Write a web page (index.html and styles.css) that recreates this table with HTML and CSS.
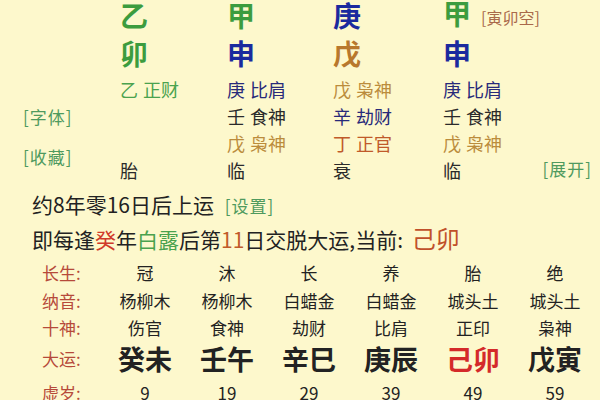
FILE: index.html
```html
<!DOCTYPE html>
<html lang="zh">
<head>
<meta charset="utf-8">
<link rel="stylesheet" href="styles.css">
</head>
<body>
<div class="page">
  <section class="top">
    <div class="side">
      <span class="link">[字体]</span>
      <span class="link">[收藏]</span>
    </div>
    <div class="pillars">
      <div class="big green">乙</div>
      <div class="big green">甲</div>
      <div class="big blue">庚</div>
      <div class="big green">甲<span class="kong">[寅卯空]</span></div>

      <div class="big green">卯</div>
      <div class="big blue">申</div>
      <div class="big brown">戊</div>
      <div class="big blue">申</div>

      <div class="sm lgreen">乙 正财</div>
      <div class="sm navy">庚 比肩</div>
      <div class="sm tan">戊 枭神</div>
      <div class="sm navy">庚 比肩</div>

      <div class="sm"></div>
      <div class="sm dark">壬 食神</div>
      <div class="sm navy">辛 劫财</div>
      <div class="sm dark">壬 食神</div>

      <div class="sm"></div>
      <div class="sm tan">戊 枭神</div>
      <div class="sm orange">丁 正官</div>
      <div class="sm tan">戊 枭神</div>

      <div class="sm dark">胎</div>
      <div class="sm dark">临</div>
      <div class="sm dark">衰</div>
      <div class="sm dark split"><span>临</span><span class="link">[展开]</span></div>
    </div>
  </section>

  <p class="line">约8年零16日后上运 <span class="link set">[设置]</span></p>
  <p class="line">即每逢<span class="red">癸</span>年<span class="lgreen">白露</span>后第<span class="orange">11</span>日交脱大运,当前: <span class="cur">己卯</span></p>

  <section class="table">
    <div class="lbl">长生:</div>
    <div>冠</div><div>沐</div><div>长</div><div>养</div><div>胎</div><div>绝</div>

    <div class="lbl">纳音:</div>
    <div>杨柳木</div><div>杨柳木</div><div>白蜡金</div><div>白蜡金</div><div>城头土</div><div>城头土</div>

    <div class="lbl">十神:</div>
    <div>伤官</div><div>食神</div><div>劫财</div><div>比肩</div><div>正印</div><div>枭神</div>

    <div class="lbl">大运:</div>
    <div class="dy">癸未</div><div class="dy">壬午</div><div class="dy">辛巳</div><div class="dy">庚辰</div><div class="dy now">己卯</div><div class="dy">戊寅</div>

    <div class="lbl">虚岁:</div>
    <div>9</div><div>19</div><div>29</div><div>39</div><div>49</div><div>59</div>
  </section>
</div>
</body>
</html>
```

FILE: styles.css
```css
html, body {
  margin: 0;
  padding: 0;
  background: #fdf8cc;
}
body {
  width: 600px;
  height: 400px;
  overflow: hidden;
  font-family: "Noto Sans CJK SC", "Noto Sans", sans-serif;
  color: #222;
}
.page {
  display: flex;
  flex-direction: column;
}
.top {
  display: flex;
  height: 188px;
}
.side {
  width: 120px;
  flex: none;
  display: flex;
  flex-direction: column;
  gap: 16px;
  padding: 105px 0 0 23px;
  box-sizing: border-box;
}
.link {
  color: #4f9a5e;
  font-size: 17px;
  line-height: 24px;
  font-weight: normal;
  letter-spacing: 1px;
}
.pillars {
  flex: 1;
  display: grid;
  grid-template-columns: 107px 106px 110px 1fr;
  grid-template-rows: 31px 45px 27px 27px 27px 27px;
  align-items: center;
}
.big {
  font-size: 28px;
  line-height: 31px;
  font-weight: bold;
}
.sm {
  font-size: 18px;
  line-height: 27px;
  word-spacing: 1px;
}
.kong {
  font-size: 16px;
  font-weight: normal;
  color: #a9694a;
  margin-left: 10px;
  vertical-align: 1px;
}
.split {
  display: flex;
  justify-content: space-between;
  padding-right: 8px;
}
.green { color: #3c9c3e; }
.lgreen { color: #4aa24e; }
.blue { color: #1b2a9e; }
.brown { color: #b8782c; }
.navy { color: #282a7a; }
.tan { color: #bb8c3c; }
.orange { color: #c05a2a; }
.dark { color: #2a2a2a; }
.red { color: #d03a2a; }
.line {
  margin: 0;
  padding-left: 32px;
  font-size: 21px;
  line-height: 33px;
  color: #222;
}
.line .set {
  font-size: 17px;
  margin-left: 6px;
}
.cur {
  color: #c0502a;
  font-size: 24px;
  margin-left: 4px;
}
.table {
  display: grid;
  grid-template-columns: 104px repeat(6, 82px);
  grid-template-rows: 28px 28px 27px 34px 34px;
  align-items: center;
  text-align: center;
  font-size: 17px;
  margin-top: 2px;
}
.table .lbl {
  text-align: left;
  padding-left: 42px;
  color: #b64a3a;
}
.dy {
  font-size: 27px;
  font-weight: bold;
  color: #222;
}
.dy.now {
  color: #d42a2a;
}
```
